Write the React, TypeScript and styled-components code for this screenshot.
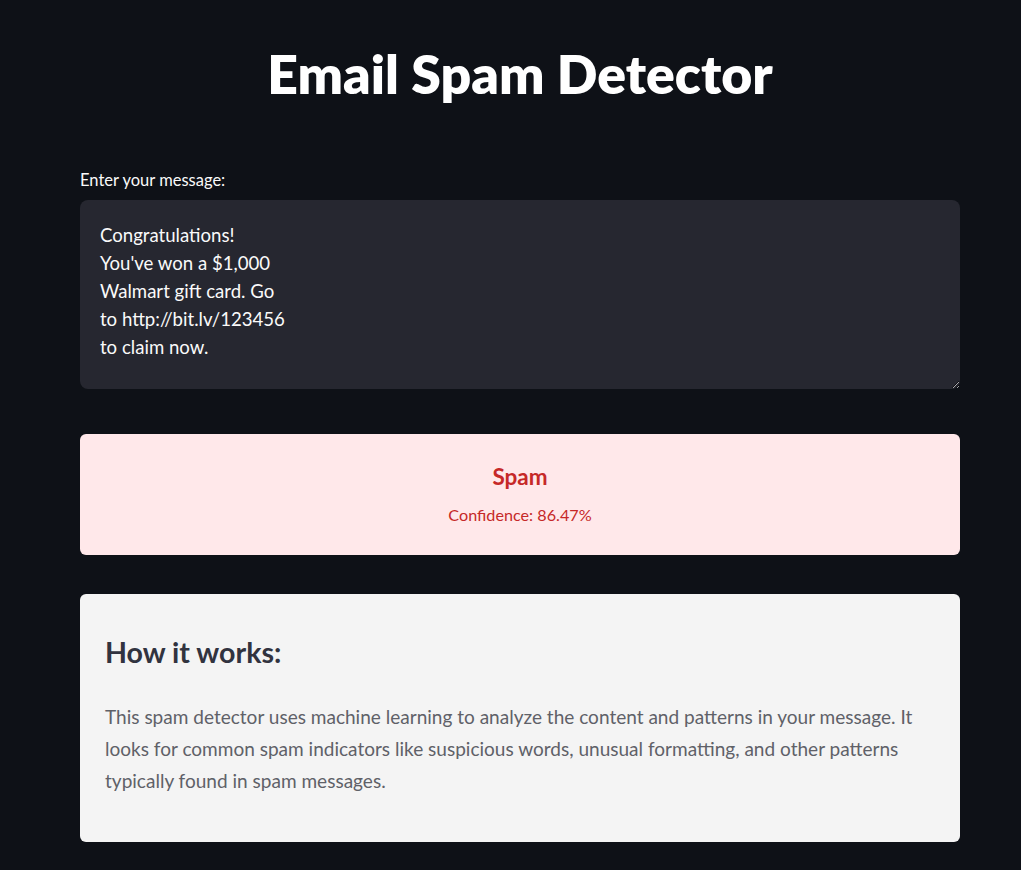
import React from "react";
import styled, { createGlobalStyle } from "styled-components";

const Global = createGlobalStyle`
  html, body { margin: 0; padding: 0; background: #0e1117; }
  body { font-family: "Lato", "Noto Sans", sans-serif; color: #fafafa; }
  * { box-sizing: border-box; }
`;

const Page = styled.main`
  width: 1021px;
  min-height: 870px;
  background: #0e1117;
  padding: 0 61px 0 80px;
  display: flex;
  flex-direction: column;
`;

const Title = styled.h1`
  margin: 0;
  padding: 41px 0 0;
  height: 160px;
  text-align: center;
  font-size: 53.5px;
  font-weight: 800;
  line-height: 64px;
  color: #ffffff;
`;

const Label = styled.label`
  display: block;
  font-size: 16.5px;
  line-height: 20px;
  height: 40px;
  padding-top: 10px;
  color: #fafafa;
`;

const TextArea = styled.textarea`
  display: block;
  width: 880px;
  height: 189px;
  background: #262730;
  color: #fafafa;
  border: none;
  border-radius: 8px;
  padding: 21px 20px;
  font-family: inherit;
  font-size: 18.6px;
  line-height: 28px;
  resize: vertical;
  outline: none;
`;

const Result = styled.section`
  margin-top: 45px;
  width: 880px;
  height: 121px;
  background: #ffe8ea;
  border-radius: 6px;
  display: flex;
  flex-direction: column;
  align-items: center;
  padding-top: 29px;
  color: #c62828;
`;

const ResultTitle = styled.div`
  font-size: 22.5px;
  font-weight: 700;
  line-height: 28px;
`;

const ResultSub = styled.div`
  margin-top: 14px;
  font-size: 16.2px;
  line-height: 20px;
`;

const Info = styled.section`
  margin-top: 39px;
  width: 880px;
  height: 248px;
  background: #f4f4f4;
  border-radius: 6px;
  padding: 38px 25px 0;
`;

const InfoHeading = styled.h3`
  margin: 0;
  font-size: 28.6px;
  font-weight: 700;
  line-height: 40px;
  color: #31333f;
`;

const InfoText = styled.p`
  margin: 29px 0 0;
  font-size: 19.05px;
  line-height: 32px;
  color: #5f6168;
`;

export default function App() {
  return (
    <>
      <Global />
      <Page>
        <Title>Email Spam Detector</Title>
        <Label htmlFor="msg">Enter your message:</Label>
        <TextArea
          id="msg"
          defaultValue={"Congratulations!\nYou've won a $1,000\nWalmart gift card. Go\nto http://bit.lv/123456\nto claim now."}
        />
        <Result>
          <ResultTitle>Spam</ResultTitle>
          <ResultSub>Confidence: 86.47%</ResultSub>
        </Result>
        <Info>
          <InfoHeading>How it works:</InfoHeading>
          <InfoText>
            This spam detector uses machine learning to analyze the content and patterns in your message. It
            looks for common spam indicators like suspicious words, unusual formatting, and other patterns
            typically found in spam messages.
          </InfoText>
        </Info>
      </Page>
    </>
  );
}
